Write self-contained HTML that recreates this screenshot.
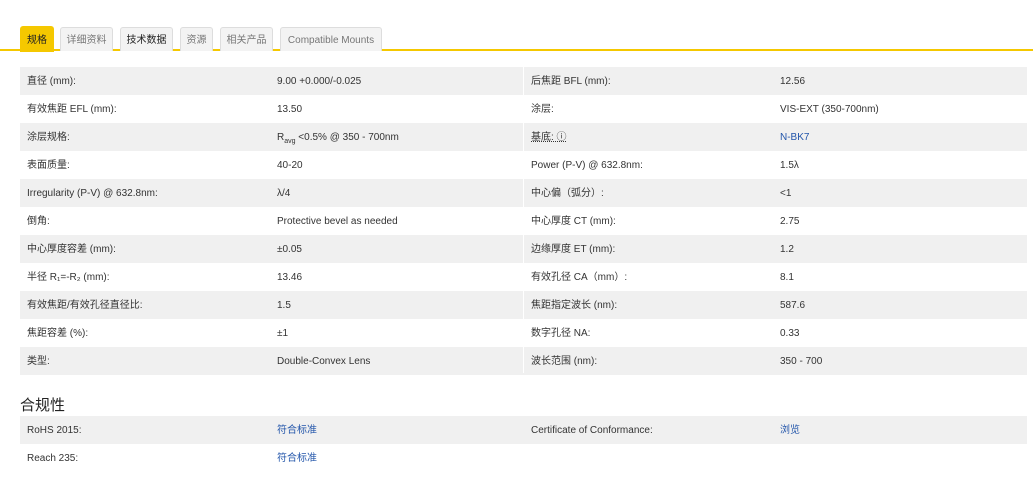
<!DOCTYPE html>
<html><head><meta charset="utf-8"><style>
*{margin:0;padding:0;box-sizing:border-box}
body{width:1033px;height:498px;background:#fff;font-family:"Liberation Sans","Noto Sans CJK SC",sans-serif;color:#333;font-size:10px;position:relative;overflow:hidden}
.tabs{position:absolute;top:26px;left:0;width:1033px;height:25px;border-bottom:2px solid #f5c800}
.tab{position:absolute;top:1px;height:24px;background:#f3f3f3;border:1px solid #ddd;border-bottom:none;border-radius:3px 3px 0 0;font-size:10px;line-height:26px;text-align:center;color:#777}
.tab.a{background:#f5c800;border-color:#f5c800;color:#222;top:0;height:26px;line-height:27px}
.tab.d{color:#222}
.row{position:absolute;left:20px;width:1007px;height:28px;line-height:30px}
.row.s{background:#f0f0f0}
.row span{position:absolute;top:0;white-space:nowrap}
.c1{left:7px;color:#333}.c2{left:257px}.c3{left:511px}.c4{left:760px}
.sep{position:absolute;left:523px;top:67px;width:1px;height:306px;background:#fff}
a{color:#2255aa;text-decoration:none}
h3{position:absolute;left:20px;top:394px;font-size:15px;font-weight:normal;color:#222}
sub{font-size:7px}
</style></head><body>
<div class="tabs">
<div class="tab a" style="left:20px;width:34px">规格</div>
<div class="tab" style="left:60px;width:53px">详细资料</div>
<div class="tab d" style="left:120px;width:53px">技术数据</div>
<div class="tab" style="left:180px;width:33px">资源</div>
<div class="tab" style="left:220px;width:53px">相关产品</div>
<div class="tab" style="left:280px;width:102px">Compatible Mounts</div>
</div>
<div class="row s" style="top:67px"><span class="c1">直径 (mm):</span><span class="c2">9.00 +0.000/-0.025</span><span class="c3">后焦距 BFL (mm):</span><span class="c4">12.56</span></div>
<div class="row" style="top:95px"><span class="c1">有效焦距 EFL (mm):</span><span class="c2">13.50</span><span class="c3">涂层:</span><span class="c4">VIS-EXT (350-700nm)</span></div>
<div class="row s" style="top:123px"><span class="c1">涂层规格:</span><span class="c2">R<sub>avg</sub> &lt;0.5% @ 350 - 700nm</span><span class="c3" style="text-decoration:underline dotted">基底: ⓘ</span><span class="c4"><a>N-BK7</a></span></div>
<div class="row" style="top:151px"><span class="c1">表面质量:</span><span class="c2">40-20</span><span class="c3">Power (P-V) @ 632.8nm:</span><span class="c4">1.5λ</span></div>
<div class="row s" style="top:179px"><span class="c1">Irregularity (P-V) @ 632.8nm:</span><span class="c2">λ/4</span><span class="c3">中心偏（弧分）:</span><span class="c4">&lt;1</span></div>
<div class="row" style="top:207px"><span class="c1">倒角:</span><span class="c2">Protective bevel as needed</span><span class="c3">中心厚度 CT (mm):</span><span class="c4">2.75</span></div>
<div class="row s" style="top:235px"><span class="c1">中心厚度容差 (mm):</span><span class="c2">±0.05</span><span class="c3">边缘厚度 ET (mm):</span><span class="c4">1.2</span></div>
<div class="row" style="top:263px"><span class="c1">半径 R₁=-R₂ (mm):</span><span class="c2">13.46</span><span class="c3">有效孔径 CA（mm）:</span><span class="c4">8.1</span></div>
<div class="row s" style="top:291px"><span class="c1">有效焦距/有效孔径直径比:</span><span class="c2">1.5</span><span class="c3">焦距指定波长 (nm):</span><span class="c4">587.6</span></div>
<div class="row" style="top:319px"><span class="c1">焦距容差 (%):</span><span class="c2">±1</span><span class="c3">数字孔径 NA:</span><span class="c4">0.33</span></div>
<div class="row s" style="top:347px"><span class="c1">类型:</span><span class="c2">Double-Convex Lens</span><span class="c3">波长范围 (nm):</span><span class="c4">350 - 700</span></div>
<div class="sep"></div>
<h3>合规性</h3>
<div class="row s" style="top:416px"><span class="c1">RoHS 2015:</span><span class="c2"><a>符合标准</a></span><span class="c3">Certificate of Conformance:</span><span class="c4"><a>浏览</a></span></div>
<div class="row" style="top:444px"><span class="c1">Reach 235:</span><span class="c2"><a>符合标准</a></span></div>
</body></html>
